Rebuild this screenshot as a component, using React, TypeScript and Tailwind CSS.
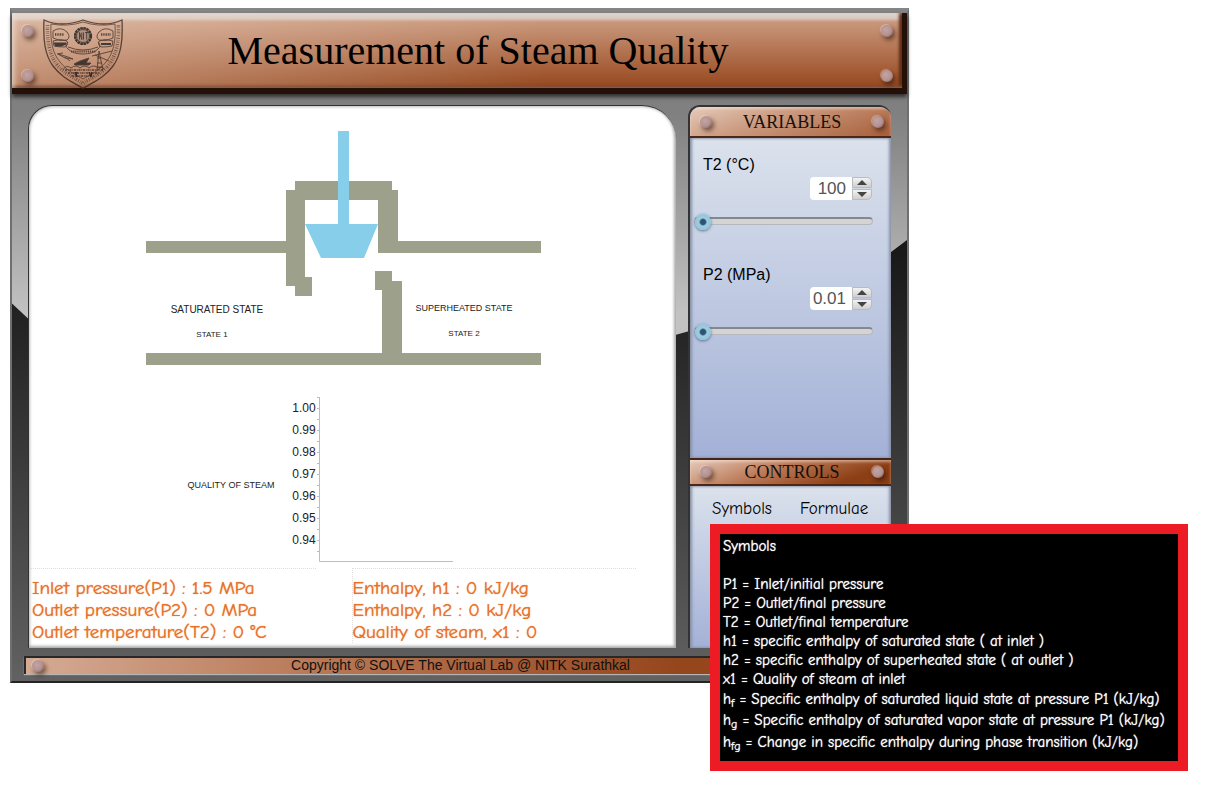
import { useState } from "react";

const comic = "font-['Comic_Sans_MS','Comic_Neue',Lato,sans-serif] font-medium [text-shadow:0_0_1px_currentColor]";

function Rivet() {
  return (
    <span className="block size-3 shrink-0 rounded-full bg-[radial-gradient(circle_at_40%_40%,#c2a5a3_0,#b39190_55%,#8a6a68_75%,#5d4038_100%)] shadow-[2px_3px_5px_rgba(40,15,5,0.6),-1px_-1px_1px_rgba(255,235,225,0.4)]" />
  );
}

function Crest() {
  return (
    <svg viewBox="0 0 80 70" className="h-[70px] w-20 shrink-0 opacity-80" fill="none" stroke="#3a2a24" strokeWidth="0.9" role="img" aria-label="NITK crest">
      <path d="M1 1 Q18 9 40 1 Q62 9 79 1 C80 22 78 36 70 47 C61 59 50 63 40 69.500 C30 63 19 59 10 47 C2 36 0 22 1 1 Z" strokeWidth="1.300" />
      <path d="M8 5 Q25 8 40 3 Q55 8 72 5 C73 23 70 35 63 43 C56 52 47 56 40 60 C33 56 24 52 17 43 C10 35 7 23 8 5 Z" strokeWidth="0.800" />
      <path d="M4.500 6 C4 23 7 36 13.500 45 C21 55 31 58 40 64.500 C49 58 59 55 66.500 45 C73 36 76 23 75.500 6" strokeWidth="3.600" strokeDasharray="0.800 1.300 0.500 1.100 1 1.500" opacity="0.75" />
      <circle cx="40" cy="17" r="8" strokeWidth="2.200" strokeDasharray="2.600 0.550" stroke="#151515" />
      <circle cx="40" cy="17" r="6.500" fill="#a98b7c" stroke="#1d1d1d" />
      <path d="M36.500 20.500v-7l2.300 7v-7M40.500 13.500v7M42 13.500h3.500M43.700 13.500v7" stroke="#202020" />
      <path d="M10 12 Q18 7 24 13 Q28 18 24 21 Q17 23 10 19 Z M10 22 Q18 19 24 22 Q26 26 22 28 Q15 28 11 27 Z" />
      <path d="M70 12 Q62 7 56 13 Q52 18 56 21 Q63 23 70 19 Z M70 22 Q62 19 56 22 Q54 26 58 28 Q65 28 69 27 Z" />
      <path d="M12 15.500h9M58 15.500h10" strokeWidth="2.500" strokeDasharray="1 .7" />
      <path d="M11 24.500h12l-5 2h-6M58 25h10" stroke="#222" strokeWidth="2" />
      <path d="M25 23 q-4 4 0 7 q5 5 15 5 q10 0 15-5 q4-3 0-7 M25 28 Q40 34 55 28" />
      <path d="M28 32.500h25" strokeWidth="2.200" strokeDasharray="1.200 .9" />
      <path d="M15 35 L25 38 L30 40 L22 39 Z M22 38 L27 42 M14 35 L20 34 M49 37 L69 32 M52 36 L66 42" />
      <path d="M31 45 L37 42 L46 39 L43 44 L48 44 L46 46 L32 46 Z" fill="#202020" />
      <path d="M56 32 L54 51 M56 32 L60 51 M54 39h4M54 44h5M54 48h6" />
      <path d="M20 51 Q23 45 28 49 Q33 45 37 49 Q42 45 46 49 Q51 45 55 49 Q60 47 61 50" />
      <path d="M22 51h38M25 54h31M29 57h22" strokeWidth="1.500" strokeDasharray="2 .8 1 .7" />
      <path d="M32 53l2 5M46 53l2 5M34 53l-1 4M49 53l-1 4" stroke="#151515" strokeWidth="1.400" />
    </svg>
  );
}

const ticks = ["1.00", "0.99", "0.98", "0.97", "0.96", "0.95", "0.94"];

function Diagram() {
  return (
    <svg viewBox="29 106 647 462" className="block w-full" role="img" aria-label="Throttling valve and steam quality chart">
      <g fill="#9da08b">
        <rect x="146" y="241" width="140" height="12" />
        <rect x="397" y="241" width="144" height="12" />
        <rect x="146" y="353" width="395" height="12" />
        <path d="M295 181H392V190H398V253H378V200H305V277H312V296H295V286H286V190H295Z" />
        <path d="M375 271H392V281H402V354H382V290H375Z" />
      </g>
      <path d="M338 131H349V224H378L364 258H321L305 224H338Z" fill="#87ceeb" />
      <g fill="#222" className="font-['Liberation_Sans',Arial,sans-serif]" textAnchor="middle">
        <text x="217" y="313" fontSize="10">SATURATED STATE</text>
        <text x="464" y="311" fontSize="9">SUPERHEATED STATE</text>
        <text x="212" y="337" fontSize="8">STATE 1</text>
        <text x="464" y="336" fontSize="8">STATE 2</text>
        <text x="231" y="488" fontSize="9">QUALITY OF STEAM</text>
        {ticks.map((t, i) => (
          <text key={t} x="304" y={412 + i * 22} fontSize="12">{t}</text>
        ))}
      </g>
      <g stroke="#bdbdbd" fill="none">
        <path d="M319.500 397V561.500H453" />
        {ticks.map((t, i) => (
          <path key={t} d={`M317 ${408.5 + i * 22}h2M317 ${419.5 + i * 22}h2`} />
        ))}
        <path d="M317 397.500h2" />
      </g>
    </svg>
  );
}

function PanelHeader({ title, className }: { title: string; className: string }) {
  return (
    <header className={`flex items-center justify-between border-b-2 border-[#4d2817] pr-[7px] pl-2.5 shadow-[inset_0_2px_3px_rgba(255,235,220,0.5)] ${className}`}>
      <Rivet />
      <h2 className="font-['Liberation_Serif','Times_New_Roman',serif] text-lg leading-6 text-[#16100c]">{title}</h2>
      <Rivet />
    </header>
  );
}

type VariableProps = { id: string; label: string; min: number; max: number; step: number; start: number };

function Variable({ id, label, min, max, step, start }: VariableProps) {
  const [value, setValue] = useState(start);
  const change = (v: number) => setValue(Number(Math.min(max, Math.max(min, v)).toFixed(2)));
  const stepper =
    "flex h-[11px] w-5 items-center justify-center border border-[#bbb] bg-linear-to-b from-[#f3f3f3] to-[#cfcfcf]";
  return (
    <div className="h-[110px]">
      <label htmlFor={id} className="block px-[9px] text-base leading-6 text-black">{label}</label>
      <div className="mr-[19px] flex justify-end">
        <input
          id={id}
          type="text"
          inputMode="decimal"
          value={value}
          onChange={(e) => change(Number(e.target.value) || min)}
          className="h-[23px] w-[42px] rounded-l-sm bg-white pr-1.5 text-right text-[17px] leading-6 text-[#555] outline-none"
        />
        <span className="flex flex-col gap-px">
          <button type="button" aria-label={`Increase ${label}`} onClick={() => change(value + step)} className={`${stepper} rounded-tr-[5px]`}>
            <svg viewBox="0 0 10 5" className="h-[5px] w-2.5"><path d="M0 5L5 0L10 5Z" fill="#444" /></svg>
          </button>
          <button type="button" aria-label={`Decrease ${label}`} onClick={() => change(value - step)} className={`${stepper} rounded-br-[5px]`}>
            <svg viewBox="0 0 10 5" className="h-[5px] w-2.5"><path d="M0 0L5 5L10 0Z" fill="#444" /></svg>
          </button>
        </span>
      </div>
      <input
        type="range"
        aria-label={`${label} slider`}
        min={min}
        max={max}
        step={step}
        value={value}
        onChange={(e) => change(Number(e.target.value))}
        className="mt-3 block h-[18px] w-[179px] appearance-none bg-transparent [&::-webkit-slider-runnable-track]:h-2 [&::-webkit-slider-runnable-track]:rounded-full [&::-webkit-slider-runnable-track]:border [&::-webkit-slider-runnable-track]:border-t-2 [&::-webkit-slider-runnable-track]:border-[#b5b8bd] [&::-webkit-slider-runnable-track]:border-t-[#86888b] [&::-webkit-slider-runnable-track]:bg-[#d4d4d4] [&::-webkit-slider-thumb]:-mt-[5px] [&::-webkit-slider-thumb]:size-4 [&::-webkit-slider-thumb]:appearance-none [&::-webkit-slider-thumb]:rounded-full [&::-webkit-slider-thumb]:bg-[radial-gradient(circle,#2c5670_0,#2c5670_22%,#9fcde2_36%,#8bbdd5_100%)] [&::-webkit-slider-thumb]:shadow-[0_1px_3px_rgba(40,70,100,0.7)]"
      />
    </div>
  );
}

function SymbolsPopup() {
  return (
    <section className={`absolute top-[524px] left-[710px] w-[478px] border-10 border-[#ed1c24] bg-black pt-[3px] pb-2 pl-[3px] text-[15px] leading-[19px] whitespace-nowrap text-white ${comic}`}>
      <h2 className="mb-[19px]">Symbols</h2>
      <p>P1 = Inlet/initial pressure</p>
      <p>P2 = Outlet/final pressure</p>
      <p>T2 = Outlet/final temperature</p>
      <p>h1 = specific enthalpy of saturated state ( at inlet )</p>
      <p>h2 = specific enthalpy of superheated state ( at outlet )</p>
      <p>x1 = Quality of steam at inlet</p>
      <p className="leading-5">h<sub className="text-xs">f</sub> = Specific enthalpy of saturated liquid state at pressure P1 (kJ/kg)</p>
      <p className="leading-[22px]">h<sub className="text-xs">g</sub> = Specific enthalpy of saturated vapor state at pressure P1 (kJ/kg)</p>
      <p className="leading-[22px]">h<sub className="text-xs">fg</sub> = Change in specific enthalpy during phase transition (kJ/kg)</p>
    </section>
  );
}

export default function App() {
  return (
    <div className="relative min-h-screen bg-white px-2.5 py-2 font-['Liberation_Sans',Arial,sans-serif]">
      <main className="relative isolate w-full max-w-[899px] border-2 border-t-5 border-[#6d706f] border-t-[#858585] border-b-[#242424] bg-linear-to-b from-[#808080] from-15% to-[#c2c2c2] to-45%">
        <div
          aria-hidden="true"
          className="absolute inset-0 -z-10 bg-linear-to-b from-[#181818] from-35% to-[#626262] [clip-path:polygon(0_43.500%,2%_46%,72%_49%,76%_47.500%,98%_36%,100%_34%,100%_100%,0_100%)]"
        />
        <header className="flex h-[81px] items-center border-r-[5px] border-b-[6px] border-[#241007] bg-[linear-gradient(to_right,rgba(240,220,205,0.45),rgba(150,70,20,0)_60%),linear-gradient(to_bottom,#ddd3cd_0,#d8cac2_7%,#c9977b_12%,#ad6b48_60%,#96471d_100%)] pt-1.5 pr-[9px] pl-2.5 shadow-[0_3px_4px_#303030,inset_3px_0_4px_rgba(235,225,220,0.6),inset_-3px_-2px_3px_#5e2a12]">
          <div className="flex flex-col gap-[33px]"><Rivet /><Rivet /></div>
          <div className="ml-[9px]"><Crest /></div>
          <h1 className="mr-12 flex-1 pb-1.5 text-center font-['Liberation_Serif','Times_New_Roman',serif] text-[40px] leading-[48px] text-black">Measurement of Steam Quality</h1>
          <div className="flex flex-col gap-[33px]"><Rivet /><Rivet /></div>
        </header>

        <div className="mt-[11px] mr-4 ml-4 flex items-stretch gap-3">
          <section className="min-w-0 flex-1 overflow-hidden rounded-tl-[24px] rounded-tr-[34px] border-t border-l border-[#333] bg-white shadow-[inset_-2px_-2px_3px_#aaa,inset_1px_1px_3px_#bbb]">
            <Diagram />
            <div className={`mr-10 mb-[5px] flex justify-between gap-9 pl-px text-[19px] leading-[22px] text-[#e8722c] ${comic}`}>
              <div className="flex-1 border-t border-dotted border-[#e5dcdc] pt-2 pl-0.5">
                <p>Inlet pressure(P1) : 1.5 MPa</p>
                <p>Outlet pressure(P2) : 0 MPa</p>
                <p>Outlet temperature(T2) : 0 °C</p>
              </div>
              <div className="flex-1 border-t border-l border-dotted border-[#e5dcdc] pt-2">
                <p>Enthalpy, h1 : 0 kJ/kg</p>
                <p>Enthalpy, h2 : 0 kJ/kg</p>
                <p>Quality of steam, x1 : 0</p>
              </div>
            </div>
          </section>

          <aside className="flex w-[203px] shrink-0 flex-col overflow-hidden rounded-t-xl border-t-2 border-l-2 border-[#333] bg-[#a5b3d7]">
            <PanelHeader title="VARIABLES" className="h-[31px] bg-[linear-gradient(160deg,#e5cbbb_0,#cb9a80_40%,#a75e38_100%)]" />
            <div className="h-80 bg-linear-to-b from-[#dbe2ec] to-[#a4b1d7] pt-[15px] pl-1 shadow-[inset_-2px_0_3px_#8790a5,inset_2px_0_3px_#8790a5]">
              <Variable id="t2" label="T2 (°C)" min={100} max={300} step={1} start={100} />
              <Variable id="p2" label="P2 (MPa)" min={0.01} max={1} step={0.01} start={0.01} />
            </div>
            <PanelHeader title="CONTROLS" className="h-7 border-t-2 border-t-[#42261b] bg-[linear-gradient(160deg,#e5cbbb_0,#bc7a58_40%,#8c3e14_80%)]" />
            <div className={`flex flex-1 items-start gap-7 bg-linear-to-b from-[#dbe2ec] to-[#a4b1d7] pt-[11px] pl-[22px] text-[17px] leading-6 text-black shadow-[inset_-2px_0_3px_#8790a5,inset_2px_0_3px_#8790a5] ${comic}`}>
              <button type="button">Symbols</button>
              <button type="button">Formulae</button>
            </div>
          </aside>
        </div>

        <footer className="mx-3 mt-2 mb-[7px] flex h-[18px] items-center border-t-2 border-l-2 border-[#282828] bg-[linear-gradient(to_right,#d5ab94,#b77654_35%,#96461d_75%)] px-1.5 shadow-[0_1px_1px_#b5b5b5]">
          <Rivet />
          <p className="flex-1 pb-0.5 text-center text-sm leading-4 text-[#111]">Copyright © SOLVE The Virtual Lab @ NITK Surathkal</p>
          <Rivet />
        </footer>
      </main>
      <SymbolsPopup />
    </div>
  );
}
